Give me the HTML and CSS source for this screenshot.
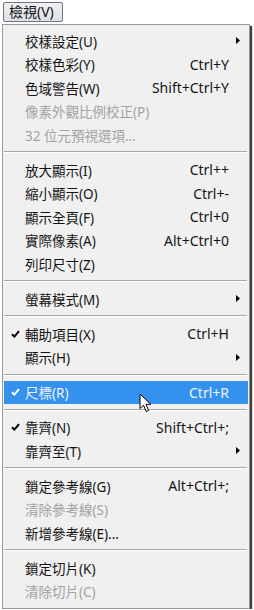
FILE: index.html
```html
<!DOCTYPE html>
<html lang="zh-Hant">
<head>
    <meta name="viewport" content="width=device-width, initial-scale=1">
    <link rel="stylesheet" href="styles.css">
    <title>檢視選單</title>
</head>
<body>
<div class="menubar">
    <span class="menuTitle">檢視(V)</span>
</div>
<div class="menu">
    <div class="item"><span class="check"></span><span class="label">校樣設定(U)</span><span class="key"></span><span class="sub"><svg width="4" height="7" viewBox="0 0 4 7"><path d="M0 0 L4 3.5 L0 7 Z" fill="#000"/></svg></span></div>
    <div class="item"><span class="check"></span><span class="label">校樣色彩(Y)</span><span class="key">Ctrl+Y</span><span class="sub"></span></div>
    <div class="item"><span class="check"></span><span class="label">色域警告(W)</span><span class="key">Shift+Ctrl+Y</span><span class="sub"></span></div>
    <div class="item disabled"><span class="check"></span><span class="label">像素外觀比例校正(P)</span><span class="key"></span><span class="sub"></span></div>
    <div class="item disabled"><span class="check"></span><span class="label">32 位元預視選項...</span><span class="key"></span><span class="sub"></span></div>
    <div class="sep"></div>
    <div class="item"><span class="check"></span><span class="label">放大顯示(I)</span><span class="key">Ctrl++</span><span class="sub"></span></div>
    <div class="item"><span class="check"></span><span class="label">縮小顯示(O)</span><span class="key">Ctrl+-</span><span class="sub"></span></div>
    <div class="item"><span class="check"></span><span class="label">顯示全頁(F)</span><span class="key">Ctrl+0</span><span class="sub"></span></div>
    <div class="item"><span class="check"></span><span class="label">實際像素(A)</span><span class="key">Alt+Ctrl+0</span><span class="sub"></span></div>
    <div class="item"><span class="check"></span><span class="label">列印尺寸(Z)</span><span class="key"></span><span class="sub"></span></div>
    <div class="sep"></div>
    <div class="item"><span class="check"></span><span class="label">螢幕模式(M)</span><span class="key"></span><span class="sub"><svg width="4" height="7" viewBox="0 0 4 7"><path d="M0 0 L4 3.5 L0 7 Z" fill="#000"/></svg></span></div>
    <div class="sep"></div>
    <div class="item"><span class="check"><svg width="9" height="8" viewBox="0 0 9 8"><path d="M1 4.2 L3.4 6.6 L8 1.2" fill="none" stroke="#000" stroke-width="2"/></svg></span><span class="label">輔助項目(X)</span><span class="key">Ctrl+H</span><span class="sub"></span></div>
    <div class="item"><span class="check"></span><span class="label">顯示(H)</span><span class="key"></span><span class="sub"><svg width="4" height="7" viewBox="0 0 4 7"><path d="M0 0 L4 3.5 L0 7 Z" fill="#000"/></svg></span></div>
    <div class="sep"></div>
    <div class="item active"><span class="check"><svg width="9" height="8" viewBox="0 0 9 8"><path d="M1 4.2 L3.4 6.6 L8 1.2" fill="none" stroke="#fff" stroke-width="2"/></svg></span><span class="label">尺標(R)</span><span class="key">Ctrl+R</span><span class="sub"></span>
        <svg class="cursor" width="13" height="20" viewBox="0 0 13 20"><path d="M1 1 L1 15.5 L4.5 12.2 L7.2 18.5 L9.6 17.4 L7 11.3 L11.8 11.3 Z" fill="#fff" stroke="#000" stroke-width="1" stroke-linejoin="round"/></svg>
    </div>
    <div class="sep"></div>
    <div class="item"><span class="check"><svg width="9" height="8" viewBox="0 0 9 8"><path d="M1 4.2 L3.4 6.6 L8 1.2" fill="none" stroke="#000" stroke-width="2"/></svg></span><span class="label">靠齊(N)</span><span class="key">Shift+Ctrl+;</span><span class="sub"></span></div>
    <div class="item"><span class="check"></span><span class="label">靠齊至(T)</span><span class="key"></span><span class="sub"><svg width="4" height="7" viewBox="0 0 4 7"><path d="M0 0 L4 3.5 L0 7 Z" fill="#000"/></svg></span></div>
    <div class="sep"></div>
    <div class="item"><span class="check"></span><span class="label">鎖定參考線(G)</span><span class="key">Alt+Ctrl+;</span><span class="sub"></span></div>
    <div class="item disabled"><span class="check"></span><span class="label">清除參考線(S)</span><span class="key"></span><span class="sub"></span></div>
    <div class="item"><span class="check"></span><span class="label">新增參考線(E)...</span><span class="key"></span><span class="sub"></span></div>
    <div class="sep"></div>
    <div class="item"><span class="check"></span><span class="label">鎖定切片(K)</span><span class="key"></span><span class="sub"></span></div>
    <div class="item disabled"><span class="check"></span><span class="label">清除切片(C)</span><span class="key"></span><span class="sub"></span></div>
</div>
</body>
</html>
```

FILE: styles.css
```css
body{
    margin: 0;
    background: #fff;
    font-family: "Noto Sans", "Noto Sans CJK TC", sans-serif;
    font-size: 13.5px;
    color: #141414;
}

.menubar{
    height: 24px;
    padding: 2px 0 0 3px;
    box-sizing: border-box;
}
.menuTitle{
    display: inline-block;
    box-sizing: border-box;
    width: 60px;
    height: 20px;
    line-height: 18px;
    padding-left: 5px;
    border: 1px solid #6f7378;
    border-radius: 2px;
    background: linear-gradient(to bottom, #eef0f3 0%, #dde1e7 100%);
    color: #111;
    font-size: 14px;
}

.menu{
    margin-left: 2px;
    width: 248px;
    box-sizing: border-box;
    padding: 4px 0 5px 0;
    background: #f0f0f0;
    border: 1px solid #9a9a9a;
    box-shadow: 2px 2px 1px #3e3e3e;
}

.item{
    position: relative;
    display: flex;
    align-items: center;
    height: 23.5px;
    margin: 0 1px;
}
.item .check{
    width: 21px;
    display: flex;
    justify-content: center;
    padding-left: 2px;
    box-sizing: border-box;
}
.item .label{
    flex: 1;
    white-space: nowrap;
}
.item .key{
    white-space: nowrap;
    font-size: 14px;
}
.item .sub{
    width: 19px;
    display: flex;
    justify-content: flex-end;
    padding-right: 8px;
    box-sizing: border-box;
}
.disabled{
    color: #a2a2a2;
}
.active{
    background: #3591ee;
    color: #eef6ff;
}
.cursor{
    position: absolute;
    left: 135px;
    top: 12px;
}

.sep{
    height: 11.5px;
    display: flex;
    align-items: center;
    margin: 0 2px 0 1px;
}
.sep:before{
    content: "";
    display: block;
    width: 100%;
    height: 1px;
    background: #a8a8a8;
    border-bottom: 1px solid #fff;
}
```
